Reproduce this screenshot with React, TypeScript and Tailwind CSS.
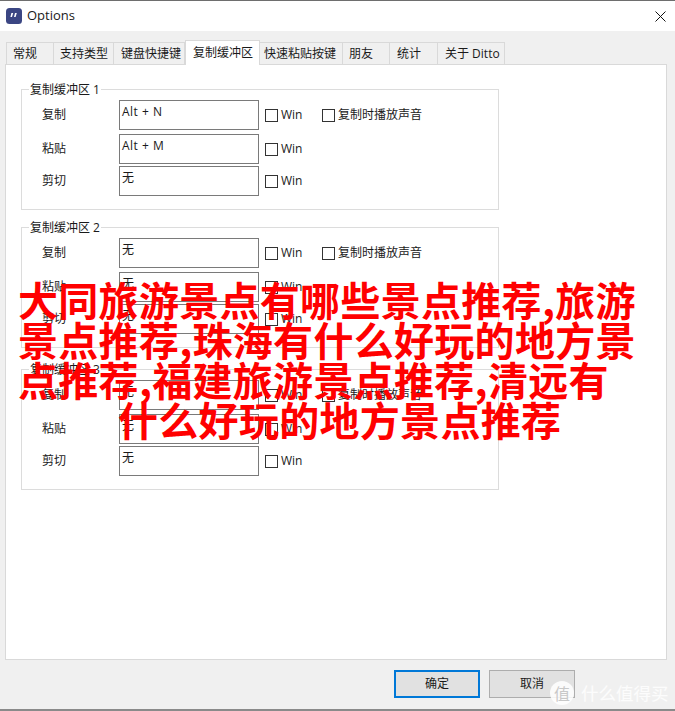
const FONT = "font-['Open_Sans','Noto_Sans_CJK_SC',sans-serif]";

const tabs = [
  { label: '常规', w: 'w-[48px] pl-[6px]' },
  { label: '支持类型', w: 'w-[60px] pl-[6px]' },
  { label: '键盘快捷键', w: 'w-[71px] pl-[7px]' },
  { label: '复制缓冲区', w: 'w-[75px] pl-[7px]', active: true },
  { label: '快速粘贴按键', w: 'w-[83px] pl-[4px]' },
  { label: '朋友', w: 'w-[47px] pl-[6px]' },
  { label: '统计', w: 'w-[48px] pl-[7px]' },
  { label: '关于 Ditto', w: 'w-[67px] pl-[7px]' },
];

const overlayLines = [
  { text: '大同旅游景点有哪些景点推荐,旅游', pad: 'pl-[18px]' },
  { text: '景点推荐,珠海有什么好玩的地方景', pad: 'pl-[18px]' },
  { text: '点推荐,福建旅游景点推荐,清远有', pad: 'pl-[18px]' },
  { text: '什么好玩的地方景点推荐', pad: 'pl-[118px]' },
];

function Check({ label }: { label: string }) {
  return (
    <div className="flex items-center gap-[3px]">
      <span className="w-[13px] h-[13px] border border-[#333333] bg-white" />
      <span className="text-[12px] leading-none text-[#1a1a1a]">{label}</span>
    </div>
  );
}

function Row({ label, value, sound, className }: { label: string; value: string; sound?: boolean; className?: string }) {
  return (
    <div className={`flex items-center h-[30px] ${className ?? ''}`}>
      <span className="w-[97px] pl-[20px] text-[12px] text-[#1a1a1a]">{label}</span>
      <div className="w-[140px] h-[30px] border border-[#7a7a7a] bg-white px-[2px] text-[12px] leading-[21px] tracking-[0.5px] text-[#1a1a1a]">
        {value}
      </div>
      <div className="ml-[6px] w-[57px]">
        <Check label="Win" />
      </div>
      {sound && <Check label="复制时播放声音" />}
    </div>
  );
}

function Group({ title, values, className }: { title: string; values: string[]; className?: string }) {
  return (
    <div className={`relative w-[478px] h-[121px] border border-[#dcdcdc] pt-[10px] ${className ?? ''}`}>
      <span className="absolute -top-[8px] left-[7px] bg-white px-[1px] text-[12px] leading-[16px] text-[#1a1a1a]">
        {title}
      </span>
      <Row label="复制" value={values[0]} sound />
      <Row label="粘贴" value={values[1]} className="mt-[4px]" />
      <Row label="剪切" value={values[2]} className="mt-[2px]" />
    </div>
  );
}

export default function App() {
  return (
    <div className={`relative w-[675px] h-[711px] overflow-hidden bg-[#f0f0f0] ${FONT}`}>
      <div className="h-[31px] bg-white border-t border-[#6e6e6e] flex items-center justify-between pl-[6px] pr-[9px]">
        <div className="flex items-center gap-[5px]">
          <svg width="16" height="16" viewBox="0 0 16 16">
            <rect width="16" height="16" rx="3.5" fill="#3b4683" />
            <path d="M5.4 5h1.8l-1.2 4H4.4zM9 5h1.8l-1.2 4H8z" fill="#ffffff" />
          </svg>
          <span className="text-[13px] text-[#1a1a1a]">Options</span>
        </div>
        <svg width="11" height="11" viewBox="0 0 11 11" stroke="#111111" fill="none">
          <path d="M0.5 0.5l10 10M10.5 0.5l-10 10" />
        </svg>
      </div>

      <div className="pl-[6px] pt-[9px] h-[24px] box-content flex items-end">
        {tabs.map((t) =>
          t.active ? (
            <div
              key={t.label}
              className={`${t.w} h-[25px] -mb-[1px] relative z-10 bg-white border border-b-0 border-[#d9d9d9] flex items-center text-[12px] text-[#1a1a1a]`}
            >
              {t.label}
            </div>
          ) : (
            <div
              key={t.label}
              className={`${t.w} h-[22px] bg-[#f0f0f0] border border-l-0 first:border-l border-b-0 border-[#d9d9d9] flex items-center text-[12px] text-[#1a1a1a]`}
            >
              {t.label}
            </div>
          ),
        )}
      </div>

      <div className="ml-[5px] w-[662px] h-[596px] bg-white border border-[#d9d9d9] pl-[15px] pt-[24px]">
        <Group title="复制缓冲区 1" values={['Alt + N', 'Alt + M', '无']} />
        <Group title="复制缓冲区 2" values={['无', '无', '无']} className="mt-[17px]" />
        <Group title="复制缓冲区 3" values={['无', '无', '无']} className="mt-[21px]" />
      </div>

      <div className="flex justify-end gap-[9px] pr-[100px] pt-[10px]">
        <button className="w-[86px] h-[28px] bg-[#e1e1e1] border-2 border-[#0078d7] text-[12px] text-[#1a1a1a]">确定</button>
        <button className="w-[86px] h-[28px] bg-[#e1e1e1] border border-[#adadad] text-[12px] text-[#1a1a1a]">取消</button>
      </div>

      <div className="absolute bottom-0 left-0 right-0 h-[2px] bg-[#8a8a8a]" />

      <div className="absolute left-0 top-[279px] w-[675px] font-['Noto_Sans_CJK_SC',sans-serif] font-bold text-[40px] leading-[40px] tracking-[0.3px] text-[#ff0000]">
        {overlayLines.map((l) => (
          <div key={l.text} className={`${l.pad} whitespace-nowrap`}>
            {l.text}
          </div>
        ))}
      </div>

      <div className="absolute left-[550px] top-[681px] flex items-center gap-[7px] text-white">
        <span className="w-[24px] h-[24px] rounded-full bg-white/85 flex items-center justify-center text-[16px] leading-none text-[#c8c8c8] font-['Noto_Sans_CJK_SC',sans-serif]">
          值
        </span>
        <span className="text-[17.5px] leading-none whitespace-nowrap text-white/80 font-['Noto_Sans_CJK_SC',sans-serif]">
          什么值得买
        </span>
      </div>
    </div>
  );
}
